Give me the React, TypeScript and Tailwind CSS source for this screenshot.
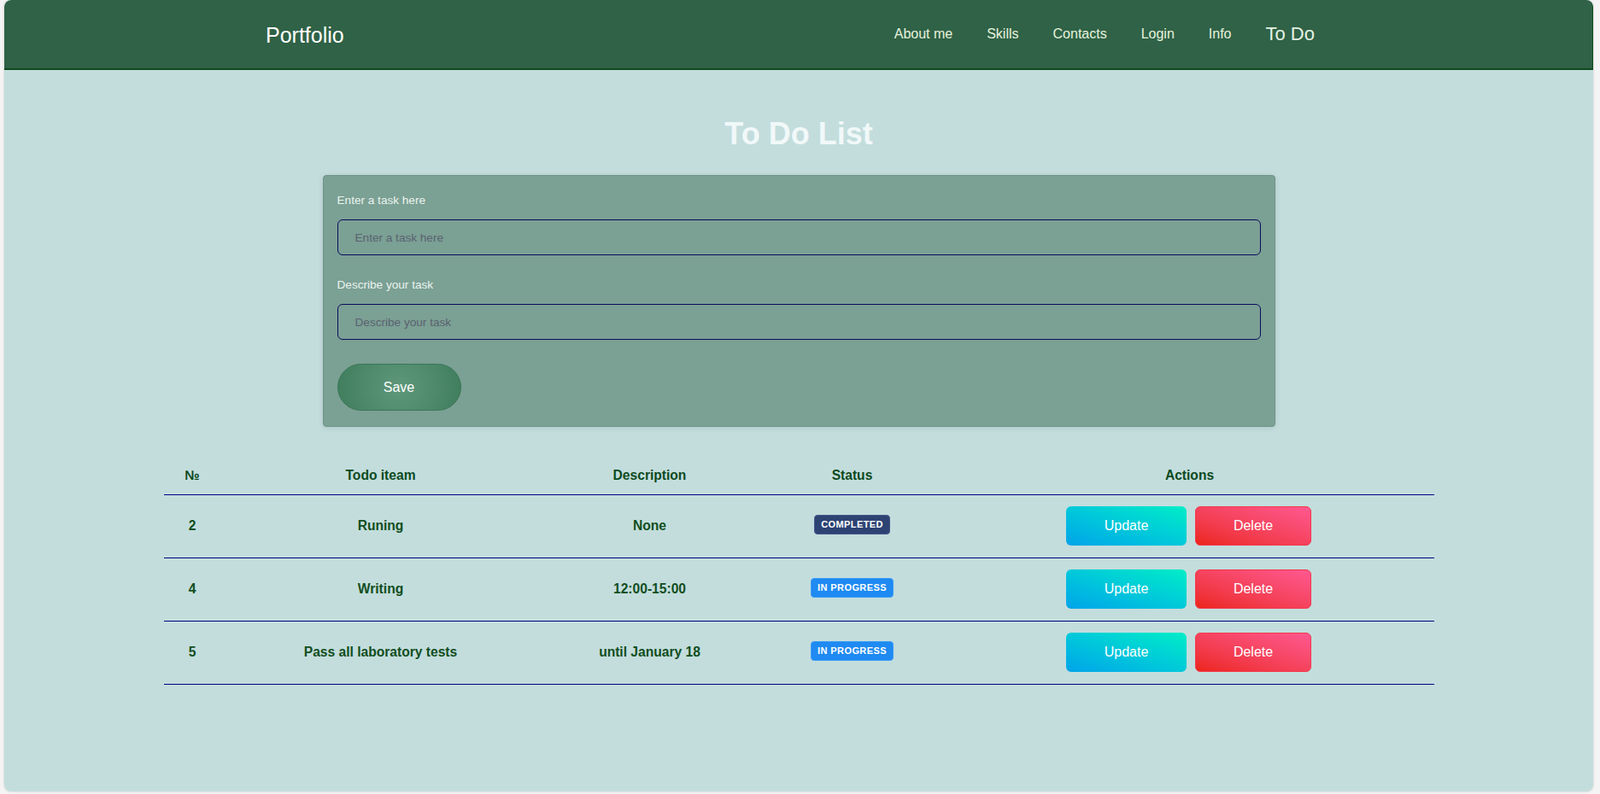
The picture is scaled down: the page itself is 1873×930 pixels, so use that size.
import React from "react";

const rows = [
  { n: 2, item: "Runing", desc: "None", status: "COMPLETED" },
  { n: 4, item: "Writing", desc: "12:00-15:00", status: "IN PROGRESS" },
  { n: 5, item: "Pass all laboratory tests", desc: "until January 18", status: "IN PROGRESS" },
];

export default function App() {
  return (
    <div
      className="min-h-[930px] bg-[#f4f4f4] pl-[5px] pr-[8px] pb-[3px]"
      style={{ fontFamily: '"Liberation Sans", Arial, sans-serif' }}
    >
      <div className="h-[927px] rounded-[8px] bg-[#c3dddd] shadow-[0_0_3px_rgba(0,0,0,0.18)] overflow-hidden flex flex-col">
        <header className="h-[82px] shrink-0 bg-[#2f6246] border-b-2 border-r border-[#0d4a1c] rounded-t-[8px] flex items-center pl-[306px] pr-[325px]">
          <div className="text-[25px] text-white leading-none pt-[2px]">Portfolio</div>
          <nav className="ml-auto flex items-center gap-[40px] text-[16px] text-[#e8f3de]">
            <span>About me</span>
            <span>Skills</span>
            <span>Contacts</span>
            <span>Login</span>
            <span>Info</span>
            <span className="text-[22px] text-[#e4f2e4] -mt-[2px]">To Do</span>
          </nav>
        </header>

        <main className="flex flex-col">
          <h1 className="mt-[54px] text-center text-[36px] leading-[42px] font-bold text-[#f1f8f8]">
            To Do List
          </h1>

          <div className="mt-[27px] mx-auto w-[1115px] rounded-[4px] bg-[#7ba094] border border-[#6f9488] shadow-[0_1px_6px_rgba(0,0,0,0.12)] pt-[19px] px-[16px] pb-[18px]">
            <label className="block text-[13.6px] leading-[20px] text-[#eaf3ee]">Enter a task here</label>
            <input
              className="mt-[12px] block w-full h-[42px] rounded-[6px] border border-[#0b0b5c] bg-transparent pl-[20px] text-[13.6px] outline-none placeholder:text-[#5a6270]"
              placeholder="Enter a task here"
            />
            <label className="mt-[25px] block text-[13.6px] leading-[20px] text-[#eaf3ee]">Describe your task</label>
            <input
              className="mt-[12px] block w-full h-[42px] rounded-[6px] border border-[#0b0b5c] bg-transparent pl-[20px] text-[13.6px] outline-none placeholder:text-[#5a6270]"
              placeholder="Describe your task"
            />
            <button className="mt-[28px] block w-[145px] h-[55px] rounded-full border border-[#3a7757] bg-[radial-gradient(circle,#5f987b_0%,#3f7d5d_100%)] text-[16px] text-white">
              Save
            </button>
          </div>

          <table className="mt-[35px] mx-auto w-[1487px] table-fixed border-collapse">
            <colgroup>
              <col className="w-[67px]" />
              <col className="w-[374px]" />
              <col className="w-[256px]" />
              <col className="w-[218px]" />
              <col className="w-[572px]" />
            </colgroup>
            <thead>
              <tr className="h-[44px] border-b border-[#000080]">
                {["№", "Todo iteam", "Description", "Status", "Actions"].map((h) => (
                  <th key={h} className="text-center text-[15.6px] font-bold text-[#0c4a1d] align-middle p-0">
                    {h}
                  </th>
                ))}
              </tr>
            </thead>
            <tbody>
              {rows.map((r) => (
                <tr key={r.n} className="h-[74px] border-b border-[#000080]">
                  <td className="text-center text-[15.6px] font-bold text-[#114e20] align-middle p-0">{r.n}</td>
                  <td className="text-center text-[15.6px] font-bold text-[#114e20] align-middle p-0">{r.item}</td>
                  <td className="text-center text-[15.6px] font-bold text-[#114e20] align-middle p-0">{r.desc}</td>
                  <td className="align-middle p-0">
                    <div className="flex justify-center items-center pb-[4px]">
                      {r.status === "COMPLETED" ? (
                        <span className="h-[23px] leading-[21px] px-[7px] rounded-[4px] border border-[#43578a] bg-[#2d4373] text-[11px] font-bold tracking-[0.4px] text-white">
                          COMPLETED
                        </span>
                      ) : (
                        <span className="h-[23px] leading-[21px] px-[7px] rounded-[4px] border border-[#3c9cf6] bg-[#1e8af2] text-[11px] font-bold tracking-[0.4px] text-white">
                          IN PROGRESS
                        </span>
                      )}
                    </div>
                  </td>
                  <td className="align-middle p-0">
                    <div className="flex justify-center items-center gap-[10px] pr-[2px]">
                      <button className="w-[141px] h-[46px] rounded-[6px] bg-linear-to-tr from-[#00a3e9] to-[#00edc6] text-[16px] text-white">
                        Update
                      </button>
                      <button className="w-[136px] h-[46px] rounded-[6px] border border-[#f2384a] bg-linear-to-tr from-[#ec2418] to-[#ff5890] text-[16px] text-white">
                        Delete
                      </button>
                    </div>
                  </td>
                </tr>
              ))}
            </tbody>
          </table>
        </main>
      </div>
    </div>
  );
}
